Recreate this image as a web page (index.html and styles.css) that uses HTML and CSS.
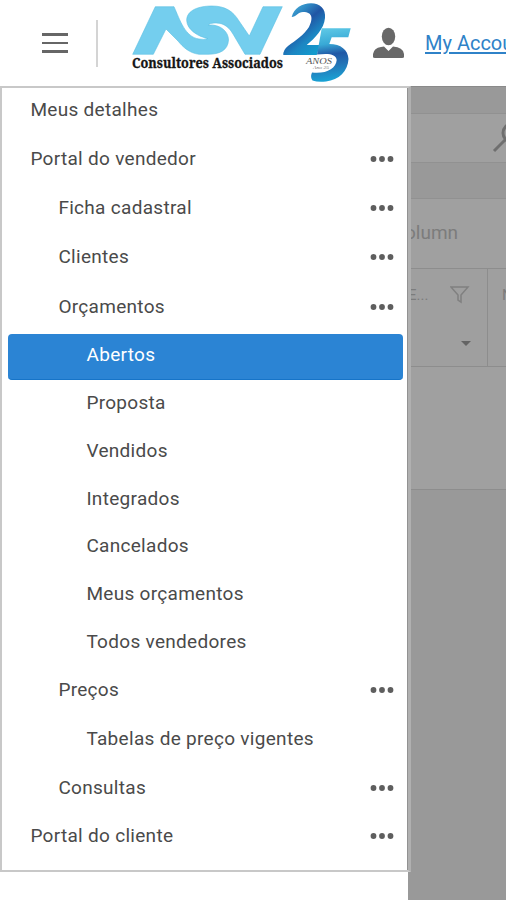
FILE: index.html
```html
<!DOCTYPE html>
<html lang="pt">
<head>
<meta charset="utf-8">
<title>Portal</title>
<link rel="stylesheet" href="styles.css">
</head>
<body>
<svg class="defs" width="0" height="0" aria-hidden="true">
  <symbol id="dots" viewBox="0 0 24 8"><circle cx="3.5" cy="4" r="2.9"/><circle cx="12" cy="4" r="2.9"/><circle cx="20.5" cy="4" r="2.9"/></symbol>
</svg>
<header class="topbar">
  <button class="burger" aria-label="Menu"><i></i><i></i><i></i></button>
  <span class="divider"></span>
  <svg class="logo" viewBox="0 0 224 84" role="img">
    <defs>
      <linearGradient id="two" x1="0" y1="0" x2=".7" y2="1"><stop offset="0" stop-color="#5cc3e4"/><stop offset=".3" stop-color="#2f8ac4"/><stop offset=".5" stop-color="#2055a4"/><stop offset=".75" stop-color="#1c86c2"/><stop offset="1" stop-color="#139bcd"/></linearGradient>
      <linearGradient id="five" x1=".3" y1="0" x2=".4" y2="1"><stop offset="0" stop-color="#5fc9e6"/><stop offset=".3" stop-color="#38a9d6"/><stop offset=".5" stop-color="#2058a6"/><stop offset=".7" stop-color="#2474b6"/><stop offset="1" stop-color="#19a5d6"/></linearGradient>
    </defs>
    <path class="mark" d="M3.700 54.300L26.300 6.700H45C51 20 56 37 70 39Q75 40 79 38.500C70 37 57.700 30 57.700 20C58 10 70 6 83 6C96 6 104 11 110 21L120.300 36L134 6.700H153.300L131 54.300H116L104 34C99 25 92 22.500 85 23Q81 23 79 25C92 24 99.500 32 99.500 40C99 50 91 54.300 79 54.300H70C60 53 54 47 49 41L37 29L24.300 54.300Z"/>
    <text class="company" x="3" y="67.500" textLength="151" lengthAdjust="spacingAndGlyphs">Consultores Associados</text>
    <path fill="url(#two)" d="M162.700 17C165 8 173 3.300 182 3.300C191 3.300 197 9 196 18C195 29 186 38 177.700 45H191L187.700 55H154.300Q154 50 159 46C167 40 175 35 180 27C184 19 184 12 174 12C169 12 167 17 162.700 17Z"/>
    <path fill="url(#five)" d="M192.700 28.300H221.700L219.300 37.300H202.700L200.300 44C212 44 219 50 219.500 59C219 71 210 80 197 81.500Q189 82.500 183.500 80.500Q181 77 183 72.500C197 74 207 69 207.700 60C207 54 200 53 188 54.500Z"/>
    <text class="anos" x="177" y="64" textLength="26" lengthAdjust="spacingAndGlyphs">ANOS</text>
    <text class="years" x="184" y="69" textLength="16" lengthAdjust="spacingAndGlyphs">Ano 25</text>
  </svg>
  <svg class="user" viewBox="0 0 32 32"><ellipse cx="15.5" cy="9.500" rx="6.700" ry="8.700"/><path d="M0 30V27Q1 21 8 20L11 19.500L15.500 24L20 19.500Q30 20 31 27V30Q31 31 29 31H2Q0 31 0 30Z"/></svg>
  <a class="account" href="#">My Account</a>
</header>
<main class="stage">
  <div class="sidebar">
    <nav class="menu">
      <a class="row">Meus detalhes</a>
      <a class="row">Portal do vendedor<svg><use href="#dots"/></svg></a>
      <a class="row l2">Ficha cadastral<svg><use href="#dots"/></svg></a>
      <a class="row l2">Clientes<svg><use href="#dots"/></svg></a>
      <a class="row l2">Orçamentos<svg><use href="#dots"/></svg></a>
      <a class="row l3 active">Abertos</a>
      <a class="row l3">Proposta</a>
      <a class="row l3">Vendidos</a>
      <a class="row l3">Integrados</a>
      <a class="row l3">Cancelados</a>
      <a class="row l3">Meus orçamentos</a>
      <a class="row l3">Todos vendedores</a>
      <a class="row l2 low">Preços<svg><use href="#dots"/></svg></a>
      <a class="row low l3w">Tabelas de preço vigentes</a>
      <a class="row l2 low">Consultas<svg><use href="#dots"/></svg></a>
      <a class="row low">Portal do cliente<svg><use href="#dots"/></svg></a>
    </nav>
  </div>
  <section class="page">
    <div class="gap-top"></div>
    <div class="search"><svg viewBox="0 0 32 32"><circle cx="20" cy="11" r="9"/><path d="M13 18L2 29"/></svg></div>
    <div class="gap-mid"></div>
    <div class="group"><span>olumn</span></div>
    <div class="grid">
      <div class="cell first">
        <div class="head"><span>E...</span><svg viewBox="0 0 20 18"><path d="M1 1H18L11 9V16L8 14V9Z"/></svg></div>
        <div class="filter"><i class="caret"></i></div>
      </div>
      <div class="cell second"><div class="head">N</div></div>
    </div>
    <div class="empty"></div>
  </section>
</main>
</body>
</html>
```
FILE: styles.css
```css
* { box-sizing: border-box; }
html, body { height: 100%; overflow: hidden; }
body { margin: 0; font-family: Roboto, "Liberation Sans", sans-serif; font-size: 19px; color: #4a4a4a; background: #fff; }
.defs { display: block; }
.topbar { display: flex; align-items: center; height: 86px; overflow: hidden; }
.burger { display: grid; gap: 6px; width: 26px; margin: 0 0 0 42px; padding: 0; border: 0; background: none; flex: none; }
.burger i { height: 2.6px; background: #666; }
.divider { flex: none; width: 2px; height: 47px; margin-left: 28px; background: #d4d4d4; }
.logo { flex: none; width: 224px; height: 84px; margin: 0 0 2px 31px; }
.mark { fill: #74ceee; stroke: #5bbfe2; stroke-width: .6; }
.company { font: bold 14px "Noto Serif", "DejaVu Serif", serif; fill: #151515; stroke: #151515; stroke-width: .3; }
.anos { font: italic 9px "Liberation Serif", serif; fill: #555; }
.years { font: italic 5px "Liberation Serif", serif; fill: #777; }
.user { flex: none; width: 32px; height: 32px; margin-left: 20px; fill: #686868; }
.account { flex: none; margin-left: 20px; color: #2f82c8; font-size: 20px; white-space: nowrap; text-decoration: underline; text-underline-offset: 2px; }
.stage { display: flex; height: 814px; }
.sidebar { flex: none; width: 408px; background: #fff; }
.menu { position: relative; z-index: 1; width: 411px; height: 786px; border: 2px solid #c8c8c8; border-right: 3px solid #b0b0b0; box-shadow: inset -1px 0 #929292; }
.row { display: flex; align-items: center; justify-content: space-between; height: 49.2px; padding: 0 14px 0 28.4px; letter-spacing: .3px; white-space: nowrap; }
.row:first-child { margin-top: -3.2px; }
.row svg { width: 24px; height: 8px; margin-top: 1px; fill: #5e5e5e; }
.l2 { padding-left: 56.4px; }
.l3, .l3w { padding-left: 84.4px; }
.l3 { height: 47.8px; }
.low { height: 48.7px; }
.active { height: 46.5px; margin: 3px 5px -1.7px 5.5px; padding: 0 0 4px 79px; border-radius: 4px; background: #2b84d4; border-bottom: 1px solid #1674c8; color: #fff; }
.page { flex: 1; min-width: 0; overflow: hidden; background: #999; color: #7c7c7c; border-top: 1px solid #8a8a8a; display: flex; flex-direction: column; }
.gap-top { height: 26px; }
.search { height: 50px; border: solid #919191; border-width: 1px 0; background: #a0a0a0; overflow: hidden; }
.search svg { display: block; width: 32px; height: 32px; margin: 8px 0 0 84px; fill: none; stroke: #6f6f6f; stroke-width: 3; }
.gap-mid { height: 35px; }
.group { height: 70px; border-top: 1px solid #919191; background: #a0a0a0; display: flex; align-items: center; }
.group span { margin: -2px 0 0 -3px; }
.grid { display: flex; height: 99px; background: #9f9f9f; border: solid #8d8d8d; border-width: 1px 0; }
.first { flex: none; width: 80px; border-right: 1px solid #8d8d8d; }
.head { display: flex; align-items: center; height: 51px; font-size: 15px; }
.head svg { flex: none; width: 20px; height: 18px; margin-left: 22px; fill: none; stroke: #808080; stroke-width: 1.5; }
.second .head { margin-left: 14px; }
.filter { height: 46px; display: flex; align-items: center; justify-content: flex-end; padding-right: 16px; }
.caret { border: 5.5px solid transparent; border-top-color: #646464; border-bottom: 0; }
.empty { height: 123px; background: #a0a0a0; border-bottom: 1px solid #8d8d8d; }
```
